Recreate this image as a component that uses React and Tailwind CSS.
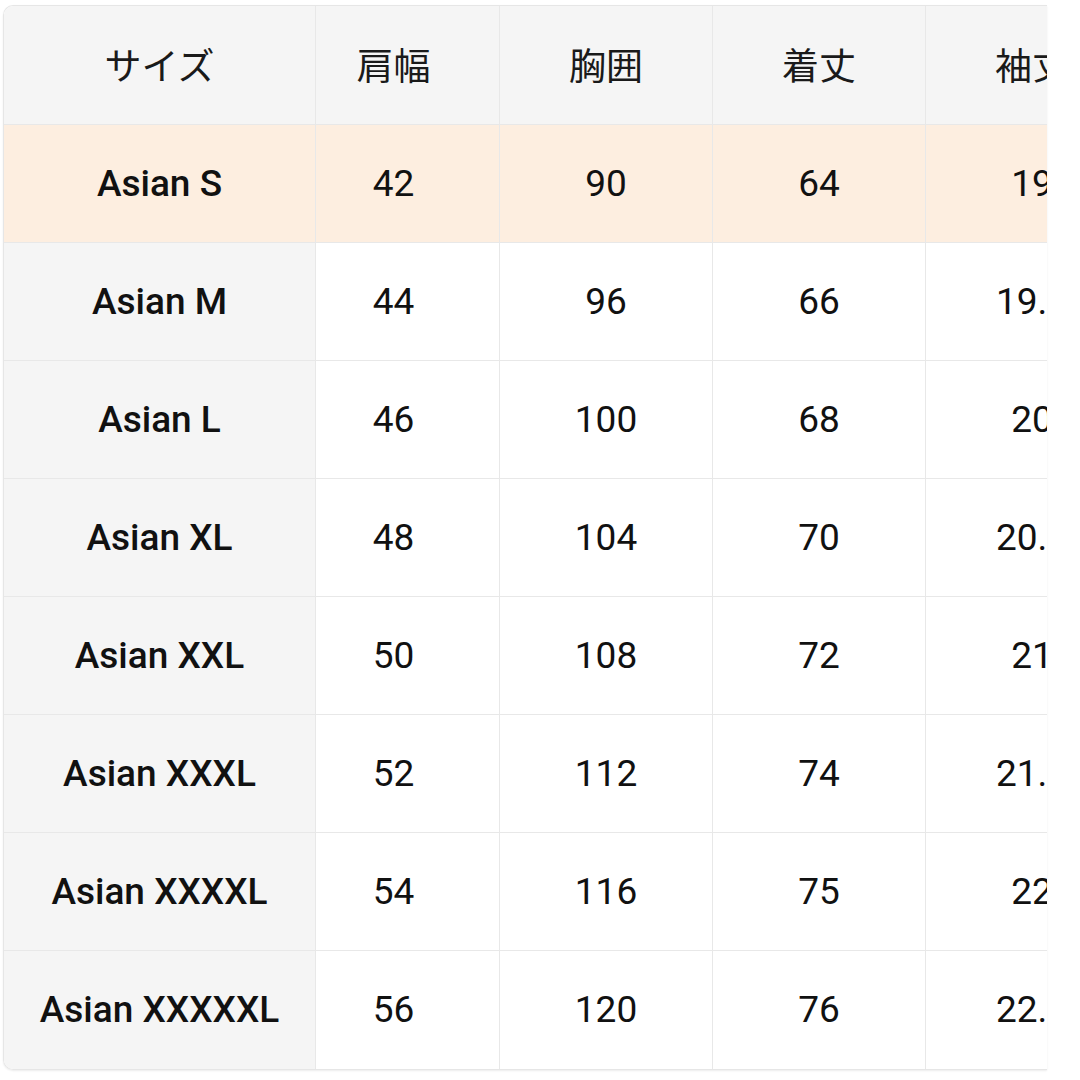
import React from "react";

const rows = [
  ["Asian S", "42", "90", "64", "19"],
  ["Asian M", "44", "96", "66", "19.5"],
  ["Asian L", "46", "100", "68", "20"],
  ["Asian XL", "48", "104", "70", "20.5"],
  ["Asian XXL", "50", "108", "72", "21"],
  ["Asian XXXL", "52", "112", "74", "21.5"],
  ["Asian XXXXL", "54", "116", "75", "22"],
  ["Asian XXXXXL", "56", "120", "76", "22.5"],
];

const headers = ["サイズ", "肩幅", "胸囲", "着丈", "袖丈"];

export default function App() {
  return (
    <div className="w-[1080px] h-[1080px] bg-white pl-[3px] pt-[5px]">
      <div className="w-[1044px] overflow-hidden rounded-l-[10px] border-t border-l border-b border-[#e6e6e6] shadow-[0_1px_2px_rgba(0,0,0,0.08)]">
        <div className="grid w-[1135px] grid-cols-[312px_184px_213px_213px_213px]">
          {headers.map((h, i) => (
            <div
              key={h}
              className={`flex h-[119px] items-center justify-center border-b border-r border-[#e8e8e8] bg-[#f5f5f5] text-[37px] font-normal text-[#1a1a1a] ${i === 1 ? "pr-[28px]" : ""}`}
              style={{ fontFamily: '"Noto Sans CJK JP", "Noto Sans", sans-serif' }}
            >
              {h}
            </div>
          ))}
          {rows.map((r, ri) =>
            r.map((c, ci) => {
              const hl = ri === 0;
              const bg = hl ? "bg-[#fdeee0]" : ci === 0 ? "bg-[#f5f5f5]" : "bg-white";
              const last = ri === rows.length - 1;
              return (
                <div
                  key={ri + "-" + ci}
                  className={`flex h-[118px] items-center justify-center border-r border-[#e8e8e8] ${last ? "" : "border-b"} ${bg} text-[37px] text-[#111111] ${ci === 0 ? "font-medium" : "font-normal"} ${ci === 1 ? "pr-[28px]" : ""}`}
                  style={{ fontFamily: 'Roboto, "Noto Sans", sans-serif' }}
                >
                  {c}
                </div>
              );
            })
          )}
        </div>
      </div>
    </div>
  );
}
